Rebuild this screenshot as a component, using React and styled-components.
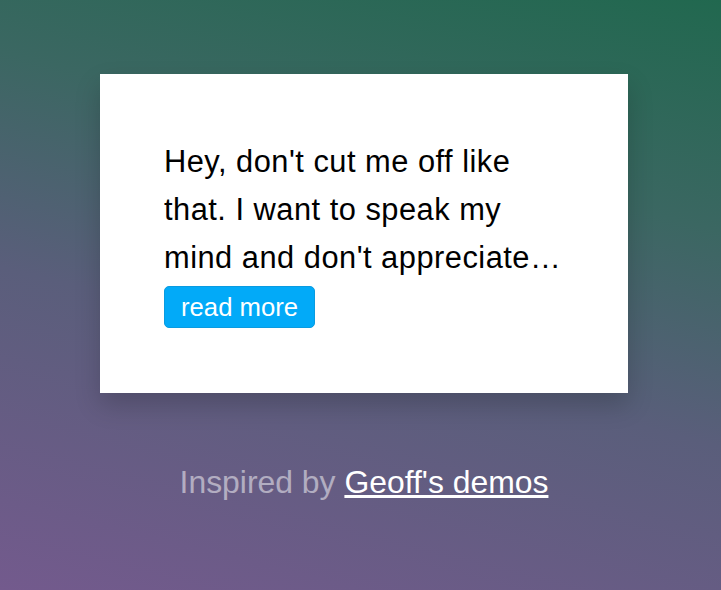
import styled, { createGlobalStyle } from "styled-components";

const GlobalStyle = createGlobalStyle`
    html, body {
        margin: 0;
        padding: 0;
        height: 100%;
    }
    body {
        font-family: "Liberation Sans", Arial, Helvetica, sans-serif;
        background: linear-gradient(14deg, #735a8d 0%, #5a5e7b 42%, #3b6762 70%, #21684f 100%);
        min-height: 590px;
    }
`

export default function App() {
    return (
        <Page>
            <GlobalStyle />
            <Card>
                <Excerpt>
                    Hey, don't cut me off like that. I want to speak my mind and don't appreciate being interrupted all the time when I have something to say.
                </Excerpt>
                <ReadMore type="button">read more</ReadMore>
            </Card>
            <Credit>
                Inspired by <CreditLink href="#">Geoff's demos</CreditLink>
            </Credit>
        </Page>
    );
}

const Page = styled.div`
    display: flex;
    flex-direction: column;
    align-items: center;
    padding: 74px 0 0 7px;
`
const Card = styled.div`
    width: 528px;
    box-sizing: border-box;
    padding: 64px 64px 65px 64px;
    background-color: #ffffff;
    box-shadow: 0 12px 24px rgba(0, 0, 0, 0.18);
    display: flex;
    flex-direction: column;
    align-items: flex-start;
`
const Excerpt = styled.p`
    margin: 0 0 4px 0;
    font-size: 30.8px;
    line-height: 48px;
    letter-spacing: 0.5px;
    color: #000000;
    display: -webkit-box;
    -webkit-box-orient: vertical;
    -webkit-line-clamp: 3;
    overflow: hidden;
`
const ReadMore = styled.button`
    height: 42px;
    padding: 0 16px;
    font-family: inherit;
    font-size: 25.7px;
    color: #ffffff;
    background-color: #02aaf8;
    border: 1px solid #0a9be0;
    border-radius: 5px;
    cursor: pointer;
`
const Credit = styled.p`
    margin: 71px 0 0 0;
    font-size: 31.9px;
    line-height: 36px;
    color: rgba(255, 255, 255, 0.5);
`
const CreditLink = styled.a`
    color: #ffffff;
    text-decoration: underline;
`
